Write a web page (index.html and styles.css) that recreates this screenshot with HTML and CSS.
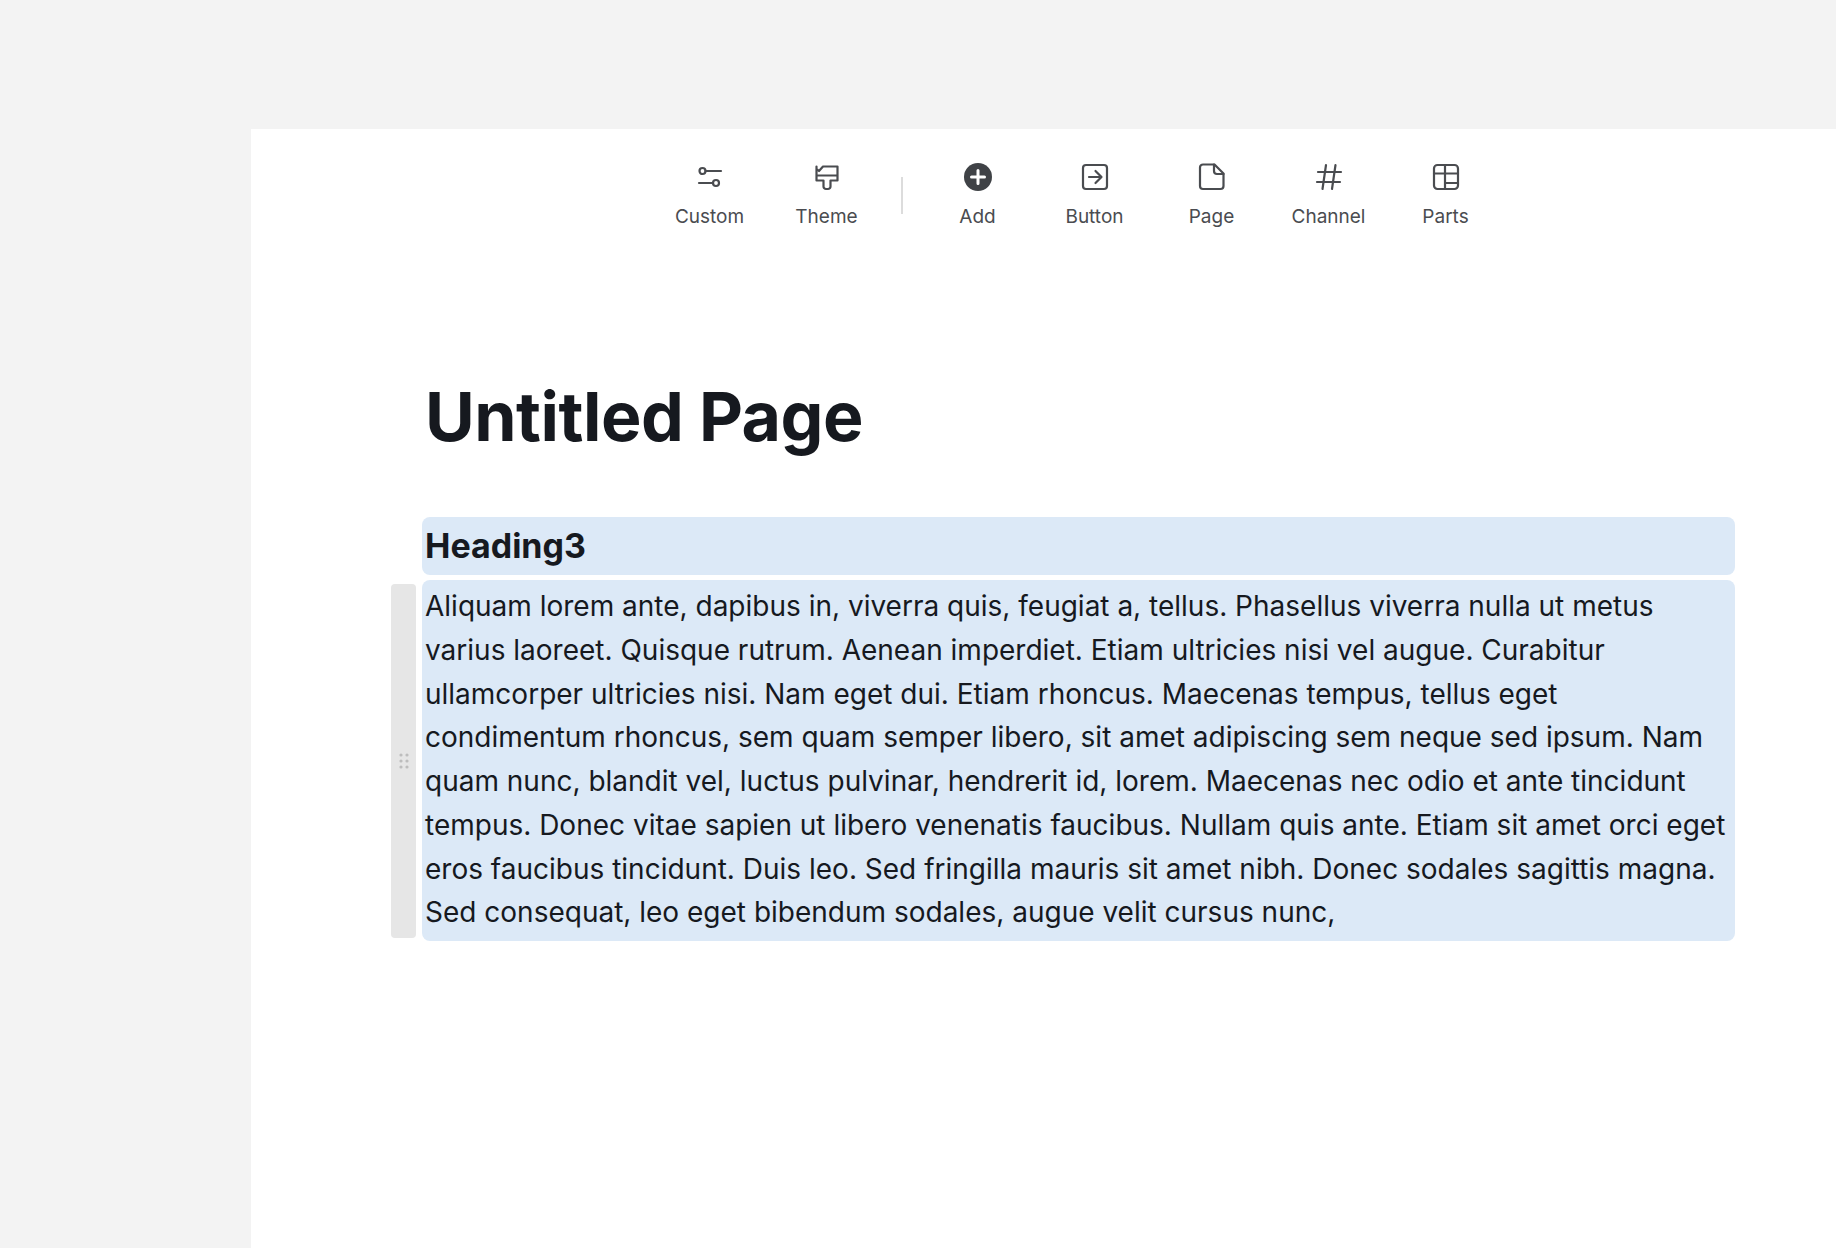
FILE: index.html
```html
<!DOCTYPE html>
<html lang="en">
<head>
<meta charset="utf-8">
<title>Untitled Page</title>
<link rel="stylesheet" href="styles.css">
</head>
<body>
<main class="panel">
  <nav class="toolbar">
    <div class="tool">
      <svg class="icon" viewBox="0 0 28 28"><circle cx="6.5" cy="8" r="3"/><path d="M9.5 8H25"/><circle cx="20" cy="20" r="3"/><path d="M3 20H17"/></svg>
      <span>Custom</span>
    </div>
    <div class="tool">
      <svg class="icon" viewBox="0 0 28 28"><path d="M3.5 3.5v2.2L6 8l4-4.500h14.500V17.500h-7v6a2.500 2.500 0 0 1-2.500 2.500h-2a2.500 2.500 0 0 1-2.500-2.500v-6h-7zM3.500 12.500h21"/></svg>
      <span>Theme</span>
    </div>
    <div class="divider"></div>
    <div class="tool">
      <svg class="icon" viewBox="0 0 28 28"><circle class="solid" cx="14" cy="14" r="14"/><path class="plus" d="M14 7.500v13M7.500 14h13"/></svg>
      <span>Add</span>
    </div>
    <div class="tool">
      <svg class="icon" viewBox="0 0 28 28"><rect x="2" y="2" width="24" height="24" rx="3"/><path d="M8 14h12M14.500 8l6 6-6 6"/></svg>
      <span>Button</span>
    </div>
    <div class="tool">
      <svg class="icon" viewBox="0 0 28 28"><path d="M5 1.500h11.500l9 9V23a3 3 0 0 1-3 3H5a3 3 0 0 1-3-3V4.500a3 3 0 0 1 3-3z"/><path d="M16 1.500V8a3 3 0 0 0 3 3h6.500"/></svg>
      <span>Page</span>
    </div>
    <div class="tool">
      <svg class="icon" viewBox="0 0 28 28"><path d="M11 2 7.500 26M20.500 2 17 26M3 9h23M2 19h23"/></svg>
      <span>Channel</span>
    </div>
    <div class="tool">
      <svg class="icon" viewBox="0 0 28 28"><rect x="2" y="2" width="24" height="24" rx="3.500"/><path d="M2 10.500h24M13 2v24M13 20h13"/></svg>
      <span>Parts</span>
    </div>
  </nav>
  <h1 class="title">Untitled Page</h1>
  <div class="blocks">
    <h3 class="block heading">Heading3</h3>
    <div class="row">
      <div class="handle">
        <svg class="grip" viewBox="0 0 12 18"><circle cx="3" cy="3" r="1.600"/><circle cx="9" cy="3" r="1.600"/><circle cx="3" cy="9" r="1.600"/><circle cx="9" cy="9" r="1.600"/><circle cx="3" cy="15" r="1.600"/><circle cx="9" cy="15" r="1.600"/></svg>
      </div>
      <p class="block para">Aliquam lorem ante, dapibus in, viverra quis, feugiat a, tellus. Phasellus viverra nulla ut metus<br>varius laoreet. Quisque rutrum. Aenean imperdiet. Etiam ultricies nisi vel augue. Curabitur<br>ullamcorper ultricies nisi. Nam eget dui. Etiam rhoncus. Maecenas tempus, tellus eget<br>condimentum rhoncus, sem quam semper libero, sit amet adipiscing sem neque sed ipsum. Nam<br>quam nunc, blandit vel, luctus pulvinar, hendrerit id, lorem. Maecenas nec odio et ante tincidunt<br>tempus. Donec vitae sapien ut libero venenatis faucibus. Nullam quis ante. Etiam sit amet orci eget<br>eros faucibus tincidunt. Duis leo. Sed fringilla mauris sit amet nibh. Donec sodales sagittis magna.<br>Sed consequat, leo eget bibendum sodales, augue velit cursus nunc,</p>
    </div>
  </div>
</main>
</body>
</html>
```

FILE: styles.css
```css
* { box-sizing: border-box; }
html, body { margin: 0; height: 100%; }
body {
  background: #f3f3f3;
  padding: 129px 0 0 251px;
  overflow: hidden;
  font-family: Inter, "Liberation Sans", sans-serif;
  color: #16191f;
}
.panel {
  background: #fff;
  height: 1119px;
  padding-top: 34px;
}
.toolbar {
  display: flex;
  align-items: flex-start;
  margin-left: 400px;
}
.tool {
  width: 117px;
  display: flex;
  flex-direction: column;
  align-items: center;
  gap: 14px;
  font-size: 19px;
  line-height: 24px;
  color: #4a4c50;
}
.icon {
  width: 28px;
  height: 28px;
  fill: none;
  stroke: #4a4c50;
  stroke-width: 2.200;
  stroke-linejoin: round;
  stroke-linecap: round;
}
.icon .solid { fill: #3f4246; stroke: none; }
.icon .plus { stroke: #fff; stroke-width: 3; }
.divider {
  width: 2px;
  height: 37px;
  margin: 14px 16px 0 16px;
  background: #dcdcdc;
}
.title {
  margin: 146px 0 0 174px;
  font-size: 68px;
  line-height: 82px;
  font-weight: 700;
  letter-spacing: -0.5px;
}
.blocks {
  margin: 60px 0 0 140px;
  width: 1344px;
  display: flex;
  flex-direction: column;
  gap: 5px;
}
.block {
  margin: 0 0 0 31px;
  width: 1313px;
  background: #dce9f7;
  border-radius: 8px;
  padding-left: 3px;
}
.heading {
  height: 58px;
  font-size: 34px;
  line-height: 58px;
  font-weight: 700;
}
.row {
  display: flex;
  align-items: center;
}
.handle {
  width: 25px;
  height: 354px;
  background: #e6e6e6;
  border-radius: 4px;
  display: flex;
  align-items: center;
  justify-content: center;
}
.grip {
  width: 12px;
  height: 18px;
  fill: #bdbdbd;
}
.para {
  margin-left: 6px;
  height: 361px;
  font-size: 28px;
  line-height: 43.750px;
  padding-top: 5px;
}
```
